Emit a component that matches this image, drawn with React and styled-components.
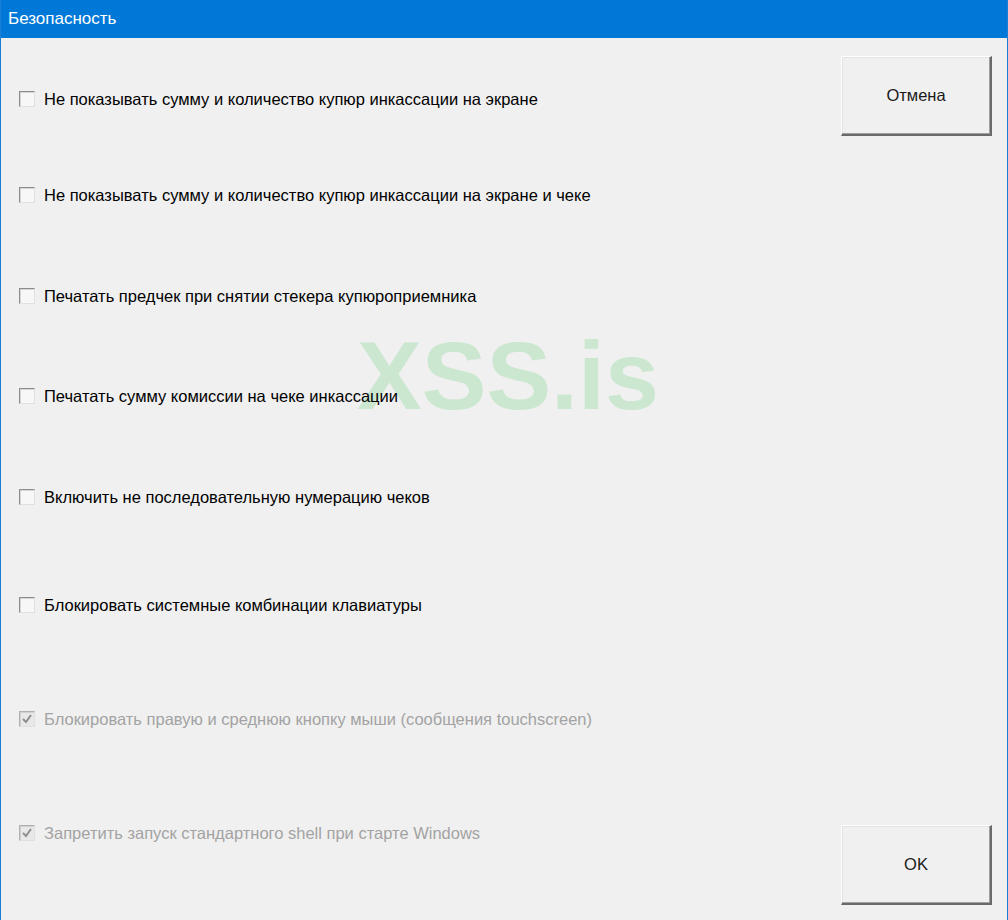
import React from 'react'
import styled, { createGlobalStyle } from 'styled-components'

const GlobalStyle = createGlobalStyle`
  html, body { margin: 0; padding: 0; background: #f0f0f0; }
  body { font-family: "Liberation Sans", Arial, sans-serif; }
`

const Window = styled.div`
  width: 1008px;
  height: 920px;
  display: flex;
  flex-direction: column;
  background: #f0f0f0;
  border-left: 1px solid #1a7fd6;
  border-right: 1px solid #1a7fd6;
  box-sizing: border-box;
  position: relative;
  overflow: hidden;
`

const TitleBar = styled.div`
  height: 38px;
  flex: none;
  background: #0078d7;
  color: #fff;
  font-size: 17px;
  display: flex;
  align-items: center;
  padding-left: 7px;
`

const Body = styled.div`
  flex: 1;
  display: flex;
  justify-content: space-between;
`

const Options = styled.div`
  display: flex;
  flex-direction: column;
  padding: 51px 0 0 18px;
  position: relative;
  z-index: 1;
`

const Row = styled.label`
  display: flex;
  align-items: center;
  height: 20px;
  margin-top: ${p => p.$space || 0}px;
  font-size: 16.5px;
  color: ${p => (p.$disabled ? '#a3a3a3' : '#000')};
  gap: 9px;
`

const Box = styled.span`
  width: 16px;
  height: 16px;
  box-sizing: border-box;
  border-top: 1px solid ${p => (p.$disabled ? '#b0b0b0' : '#8c8c8c')};
  border-left: 1px solid ${p => (p.$disabled ? '#b0b0b0' : '#8c8c8c')};
  border-right: 1px solid #e0e0e0;
  border-bottom: 1px solid #e0e0e0;
  box-shadow: inset 1px 1px 0 ${p => (p.$disabled ? '#d0d0d0' : '#d6d6d6')};
  background: ${p => (p.$disabled ? '#e8e8e8' : '#f7f7f7')};
  display: flex;
  align-items: center;
  justify-content: center;
`

const Buttons = styled.div`
  display: flex;
  flex-direction: column;
  justify-content: space-between;
  padding: 18px 15px 15px 0;
`

const Button = styled.button`
  width: 151px;
  height: 80px;
  background: #f0f0f0;
  font-family: "Liberation Sans", Arial, sans-serif;
  font-size: 16.5px;
  color: #1a1a1a;
  border-top: 1px solid #fff;
  border-left: 1px solid #fff;
  border-right: 2px solid #6a6a6a;
  border-bottom: 2px solid #6a6a6a;
  box-shadow: inset -1px -1px 0 #a0a0a0, inset 1px 1px 0 #e3e3e3;
  padding: 0;
`

const Watermark = styled.div`
  position: absolute;
  left: 356px;
  top: 320px;
  font-family: "Liberation Sans", Arial, sans-serif;
  font-weight: bold;
  font-size: 97px;
  color: #cbe7d0;
  pointer-events: none;
`

const Check = ({ checked, disabled }) => (
  <Box $disabled={disabled}>
    {checked && (
      <svg width="12" height="12" viewBox="0 0 12 12">
        <path d="M2 6 L5 9 L10 2" fill="none" stroke="#8e8e8e" strokeWidth="2" />
      </svg>
    )}
  </Box>
)

const items = [
  { text: 'Не показывать сумму и количество купюр инкассации на экране', space: 0 },
  { text: 'Не показывать сумму и количество купюр инкассации на экране и чеке', space: 76 },
  { text: 'Печатать предчек при снятии стекера купюроприемника', space: 81 },
  { text: 'Печатать сумму комиссии на чеке инкассации', space: 80 },
  { text: 'Включить не последовательную нумерацию чеков', space: 81 },
  { text: 'Блокировать системные комбинации клавиатуры', space: 88 },
  { text: 'Блокировать правую и среднюю кнопку мыши (сообщения touchscreen)', space: 94, checked: true, disabled: true },
  { text: 'Запретить запуск стандартного shell при старте Windows', space: 94, checked: true, disabled: true },
]

export default function App() {
  return (
    <>
      <GlobalStyle />
      <Window>
        <TitleBar>Безопасность</TitleBar>
        <Watermark>XSS.is</Watermark>
        <Body>
          <Options>
            {items.map((it, i) => (
              <Row key={i} $space={it.space} $disabled={it.disabled}>
                <Check checked={it.checked} disabled={it.disabled} />
                {it.text}
              </Row>
            ))}
          </Options>
          <Buttons>
            <Button>Отмена</Button>
            <Button>OK</Button>
          </Buttons>
        </Body>
      </Window>
    </>
  )
}
